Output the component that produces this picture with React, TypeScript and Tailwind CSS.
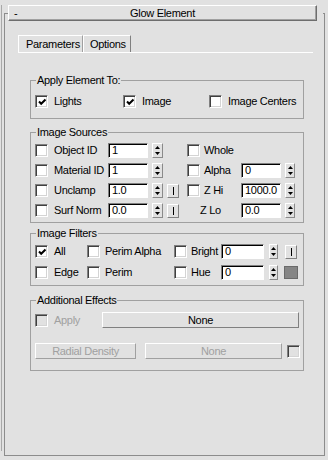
import React from 'react';

type BoxProps = { checked?: boolean; disabled?: boolean; className?: string };

function CheckBox({ checked = false, disabled = false, className = '' }: BoxProps) {
  return (
    <div
      className={`flex h-[13px] w-[13px] shrink-0 items-center justify-center border border-t-[#808080] border-l-[#808080] border-b-white border-r-white shadow-[inset_1px_1px_0_#404040,inset_-1px_-1px_0_#d4d4d4] ${
        disabled ? 'bg-[#e1e1e1]' : 'bg-white'
      } ${className}`}
    >
      {checked && (
        <svg width="9" height="9" viewBox="0 0 9 9" className="ml-[1px] mt-[1px]">
          <path d="M1 3.5 L3.2 5.8 L7.5 1.5" stroke="#000" strokeWidth="2" fill="none" />
        </svg>
      )}
    </div>
  );
}

function Field({ value, className = 'w-[40px]' }: { value: string; className?: string }) {
  return (
    <div
      className={`h-[15px] shrink-0 border border-t-[#808080] border-l-[#808080] border-b-white border-r-white bg-white pl-[3px] leading-[13px] shadow-[inset_1px_1px_0_#000] ${className}`}
    >
      {value}
    </div>
  );
}

function Spinner({ className = 'w-[11px]' }: { className?: string }) {
  return (
    <div
      className={`flex h-[15px] shrink-0 flex-col border border-t-white border-l-white border-b-[#8a8a8a] border-r-[#8a8a8a] bg-[#e1e1e1] ${className}`}
    >
      <div className="flex flex-1 items-center justify-center">
        <svg width="5" height="3" viewBox="0 0 5 3">
          <path d="M2.5 0 L5 3 L0 3 Z" fill="#000" />
        </svg>
      </div>
      <div className="flex flex-1 items-center justify-center">
        <svg width="5" height="3" viewBox="0 0 5 3">
          <path d="M0 0 L5 0 L2.5 3 Z" fill="#000" />
        </svg>
      </div>
    </div>
  );
}

function BarButton({ className = '' }: { className?: string }) {
  return (
    <div
      className={`flex h-[14px] w-[12px] shrink-0 items-center justify-center border border-t-white border-l-white border-b-[#808080] border-r-[#808080] ${className}`}
    >
      <div className="h-[8px] w-[1px] bg-black" />
    </div>
  );
}

function Button({ label, disabled = false, className = '' }: { label: string; disabled?: boolean; className?: string }) {
  return (
    <div
      className={`flex h-[16px] shrink-0 items-center justify-center border border-t-white border-l-white leading-[14px] ${
        disabled ? 'border-b-[#a0a0a0] border-r-[#a0a0a0] text-[#a0a0a0]' : 'border-b-[#808080] border-r-[#808080] text-black'
      } ${className}`}
    >
      {label}
    </div>
  );
}

function Group({ title, className = '', children }: { title: string; className?: string; children: React.ReactNode }) {
  return (
    <fieldset className={`ml-[22px] w-[274px] border border-[#a0a0a0] pl-[4px] ${className}`}>
      <legend className="ml-[1px] px-[1px] leading-[13px]">{title}</legend>
      {children}
    </fieldset>
  );
}

export default function App() {
  return (
    <div className="h-[460px] w-[328px] overflow-hidden bg-[#e1e1e1] pl-[1px] pt-[14px] font-['Liberation_Sans',Arial,sans-serif] text-[11px] tracking-[-0.3px] text-black">
      <div className="h-[446px] border-l border-[#a8a8a8] pl-[2px]">
        <fieldset className="-mt-[9px] h-[451px] w-[321px] border border-[#8c8c8c] pl-[3px]">
          <legend className="pr-[6px]">
            <div className="grid h-[16px] w-[309px] grid-cols-[20px_1fr_20px] items-center border border-t-white border-l-white border-b-[#6d6d6d] border-r-[#6d6d6d] leading-[14px] shadow-[inset_-1px_-1px_0_#a0a0a0]">
              <span className="pl-[5px]">-</span>
              <span className="text-center">Glow Element</span>
              <span />
            </div>
          </legend>

          {/* tabs */}
          <div className="ml-[10px] mt-[14px] flex h-[18px] w-[295px] border-b border-white">
            <div className="h-[17px] w-[65px] border-l border-t border-white border-r border-r-[#a0a0a0] pl-[7px] leading-[16px]">
              Parameters
            </div>
            <div className="h-[17px] w-[48px] border-l border-t border-white border-r border-r-[#808080] pl-[6px] leading-[16px]">
              Options
            </div>
          </div>

          <Group title="Apply Element To:" className="mt-[21px] pb-[10px] pt-[8px]">
            <div className="flex h-[13px] items-center">
              <div className="flex w-[88px] items-center">
                <CheckBox checked />
                <span className="ml-[6px]">Lights</span>
              </div>
              <div className="flex w-[86px] items-center">
                <CheckBox checked />
                <span className="ml-[6px]">Image</span>
              </div>
              <div className="flex items-center">
                <CheckBox />
                <span className="ml-[6px]">Image Centers</span>
              </div>
            </div>
          </Group>

          <Group title="Image Sources" className="mt-[7px] pb-[4px] pt-[4px]">
            <div className="flex flex-col gap-[5px]">
              <div className="flex h-[15px] items-center">
                <div className="flex w-[73px] items-center">
                  <CheckBox />
                  <span className="ml-[6px]">Object ID</span>
                </div>
                <Field value="1" />
                <Spinner className="ml-[4px] w-[11px]" />
                <div className="ml-[4px] w-[12px]" />
                <div className="ml-[8px] flex w-[54px] items-center">
                  <CheckBox />
                  <span className="ml-[4px]">Whole</span>
                </div>
              </div>
              <div className="flex h-[15px] items-center">
                <div className="flex w-[73px] items-center">
                  <CheckBox />
                  <span className="ml-[6px]">Material ID</span>
                </div>
                <Field value="1" />
                <Spinner className="ml-[4px] w-[11px]" />
                <div className="ml-[4px] w-[12px]" />
                <div className="ml-[8px] flex w-[54px] items-center">
                  <CheckBox />
                  <span className="ml-[4px]">Alpha</span>
                </div>
                <Field value="0" />
                <Spinner className="ml-[4px] w-[10px]" />
              </div>
              <div className="flex h-[15px] items-center">
                <div className="flex w-[73px] items-center">
                  <CheckBox />
                  <span className="ml-[6px]">Unclamp</span>
                </div>
                <Field value="1.0" />
                <Spinner className="ml-[4px] w-[11px]" />
                <BarButton className="ml-[4px]" />
                <div className="ml-[8px] flex w-[54px] items-center">
                  <CheckBox />
                  <span className="ml-[4px]">Z Hi</span>
                </div>
                <Field value="1000.0" />
                <Spinner className="ml-[4px] w-[10px]" />
              </div>
              <div className="flex h-[15px] items-center">
                <div className="flex w-[73px] items-center">
                  <CheckBox />
                  <span className="ml-[6px]">Surf Norm</span>
                </div>
                <Field value="0.0" />
                <Spinner className="ml-[4px] w-[11px]" />
                <BarButton className="ml-[4px]" />
                <div className="ml-[8px] flex w-[54px] items-center">
                  <span className="ml-[13px]">Z Lo</span>
                </div>
                <Field value="0.0" />
                <Spinner className="ml-[4px] w-[10px]" />
              </div>
            </div>
          </Group>

          <Group title="Image Filters" className="mt-[4px] pb-[5px] pt-[4px]">
            <div className="flex flex-col gap-[6px]">
              <div className="flex h-[15px] items-center">
                <div className="flex w-[52px] items-center">
                  <CheckBox checked />
                  <span className="ml-[6px]">All</span>
                </div>
                <div className="flex w-[87px] items-center">
                  <CheckBox />
                  <span className="ml-[5px]">Perim Alpha</span>
                </div>
                <div className="flex w-[47px] items-center">
                  <CheckBox />
                  <span className="ml-[4px]">Bright</span>
                </div>
                <Field value="0" className="w-[43px]" />
                <Spinner className="ml-[5px] w-[9px]" />
                <BarButton className="ml-[7px]" />
              </div>
              <div className="flex h-[15px] items-center">
                <div className="flex w-[52px] items-center">
                  <CheckBox />
                  <span className="ml-[6px]">Edge</span>
                </div>
                <div className="flex w-[87px] items-center">
                  <CheckBox />
                  <span className="ml-[5px]">Perim</span>
                </div>
                <div className="flex w-[47px] items-center">
                  <CheckBox />
                  <span className="ml-[4px]">Hue</span>
                </div>
                <Field value="0" className="w-[43px]" />
                <Spinner className="ml-[5px] w-[9px]" />
                <div className="ml-[6px] h-[13px] w-[14px] border border-[#6a6a6a] bg-[#858585]" />
              </div>
            </div>
          </Group>

          <Group title="Additional Effects" className="mt-[8px] pb-[11px] pt-[5px]">
            <div className="flex h-[16px] items-center">
              <div className="flex w-[67px] items-center">
                <CheckBox disabled />
                <span className="ml-[6px] text-[#a0a0a0]">Apply</span>
              </div>
              <Button label="None" className="w-[197px]" />
            </div>
            <div className="mt-[15px] flex h-[16px] items-center">
              <Button label="Radial Density" disabled className="w-[101px]" />
              <Button label="None" disabled className="ml-[9px] w-[137px]" />
              <CheckBox disabled className="ml-[5px]" />
            </div>
          </Group>
        </fieldset>
      </div>
    </div>
  );
}
